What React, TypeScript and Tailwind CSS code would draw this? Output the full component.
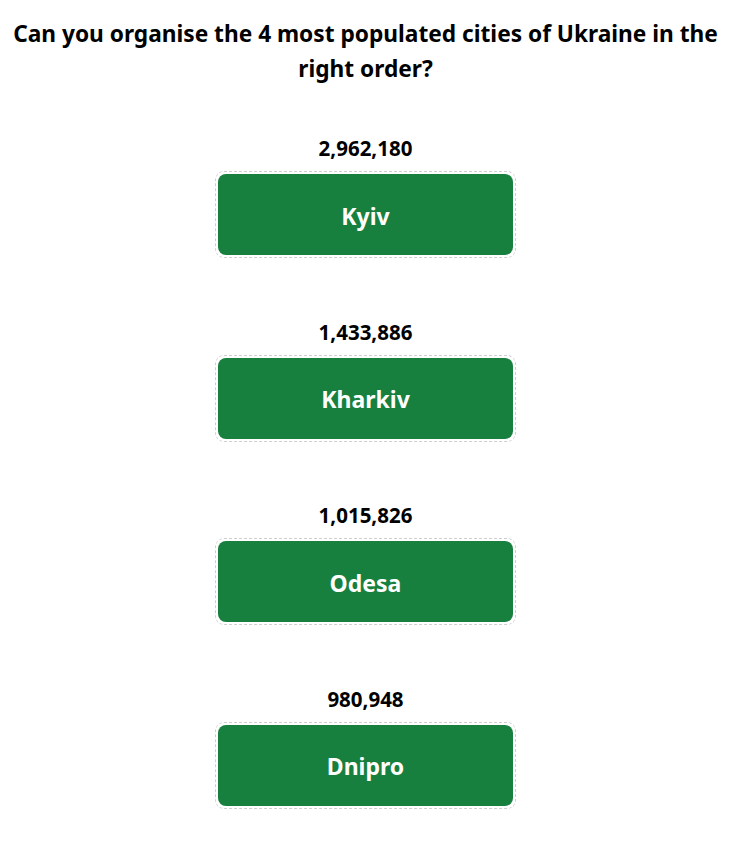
import React from 'react';

const cities = [
  { name: 'Kyiv', population: '2,962,180' },
  { name: 'Kharkiv', population: '1,433,886' },
  { name: 'Odesa', population: '1,015,826' },
  { name: 'Dnipro', population: '980,948' },
];

const App: React.FC = () => {
  return (
    <div className="min-h-screen bg-white text-black font-['Noto_Sans',sans-serif]">
      {/* Question */}
      <h1 className="pt-[16px] px-2 text-center text-[22.7px] font-bold leading-[35px]">
        Can you organise the 4 most populated cities of Ukraine in the right order?
      </h1>

      {/* City list */}
      <div className="mt-[50px] flex flex-col items-center">
        {cities.map((city) => (
          <div key={city.name} className="flex flex-col items-center mb-[61.5px]">
            <p className="text-[20.5px] font-bold leading-[24px]">{city.population}</p>
            <div className="mt-[11px] w-[301px] h-[87px] p-[2px] rounded-[9px] border border-dashed border-[#cfcfcf]">
              <div className="h-full pt-[3px] rounded-[8px] bg-[#17803e] flex items-center justify-center">
                <span className="text-white text-[23px] font-bold">{city.name}</span>
              </div>
            </div>
          </div>
        ))}
      </div>
    </div>
  );
};

export default App;
